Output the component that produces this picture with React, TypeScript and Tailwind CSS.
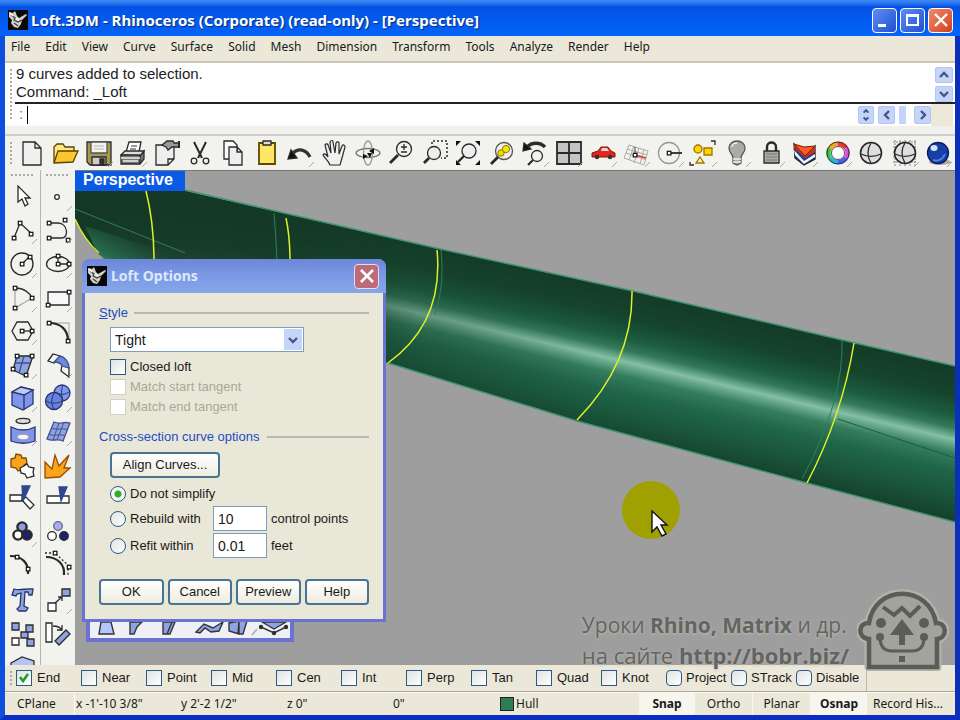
import React from 'react'

const H = ({ x, y }: { x: number; y: number }) => (
  <rect x={x - 1.7} y={y - 1.7} width="3.6" height="3.6" fill="#fff" stroke="#111" strokeWidth="1.2" />
)

const Tick = () => <path d="M24 29l5-5" stroke="#aaa" strokeWidth="1" />

const Icon = ({ children, tick = true }: { children: React.ReactNode; tick?: boolean }) => (
  <svg viewBox="0 0 30 30" className="size-[30px] shrink-0 overflow-visible" fill="none" stroke="#2a2a2a" strokeWidth="1.3">
    {children}
    {tick && <Tick />}
  </svg>
)

const RhinoLogo = () => (
  <svg viewBox="0 0 20 20" className="size-5 shrink-0">
    <rect width="20" height="20" fill="#080808" />
    <path d="M1 2l4 1 2-2 2 5 2 2 7-4 1 1-5 5-1 4-3 4-4-1-3-4 1-3-3-3z" fill="#d2d2cc" />
    <path d="M3 5l4 3-1 2 4 2 4-2M6 13l4 3" stroke="#444" strokeWidth="1.3" fill="none" />
    <path d="M2 3l3 3M8 8l3 2" stroke="#fff" strokeWidth="1.4" />
  </svg>
)

type Tool = { name: string; tick?: boolean; art: React.ReactNode }

const mainTools: Tool[] = [
  { name: 'New', tick: false, art: <path d="M6 4h12l6 6v17H6zM18 4v6h6" fill="#f0f0f0" /> },
  {
    name: 'Open',
    tick: false,
    art: (
      <>
        <path d="M4 24V9l3-3h6l2 3h9v4" fill="#ffe680" stroke="#5b4200" />
        <path d="M4 25l4-12h20l-5 11z" fill="#fbc72d" stroke="#5b4200" />
      </>
    ),
  },
  {
    name: 'Save',
    art: (
      <>
        <path d="M3 4h24v23H6l-3-3z" fill="#a39a4a" />
        <path d="M7 4h16v11H7z" fill="#f1f1ee" stroke="#555" />
        <path d="M8 19h14v8H8z" fill="#ccc" />
        <path d="M16 21h4v6h-4z" fill="#333" />
        <path d="M10 8h10M10 11h10" stroke="#ccc" />
      </>
    ),
  },
  {
    name: 'Print',
    art: (
      <>
        <path d="M8 14l3-10h12l-2 10z" fill="#fff" />
        <path d="M13 8h6M12 11h6" stroke="#777" />
        <path d="M3 17l4-4h19l-3 5z" fill="#ddd" />
        <path d="M3 17h19v9H3zM22 18l4-5v8l-4 5" fill="#777" />
        <path d="M3 20h19M5 23h15" stroke="#eee" />
      </>
    ),
  },
  {
    name: 'Document properties',
    tick: false,
    art: (
      <>
        <path d="M5 7h18v14l-6 6H5zM17 27v-6h6" fill="#eee" />
        <path d="M11 7l5-4h6l1 2h5v4h-7l-4 3-2-3z" fill="#999" />
        <path d="M28 3v7" strokeWidth="2" />
      </>
    ),
  },
  {
    name: 'Cut',
    tick: false,
    art: (
      <>
        <path d="M9 4l8 16M21 4l-8 16" strokeWidth="2" />
        <circle cx="9" cy="23" r="2.8" />
        <circle cx="21" cy="23" r="2.8" />
      </>
    ),
  },
  {
    name: 'Copy',
    tick: false,
    art: (
      <>
        <path d="M6 3h9l4 4v14H6z" fill="#fafafa" />
        <path d="M11 9h8l5 5v13H11zM19 9v5h5" fill="#eee" />
      </>
    ),
  },
  {
    name: 'Paste',
    tick: false,
    art: (
      <>
        <path d="M7 5h16v21H7z" fill="#ffe766" stroke="#5b4a00" strokeWidth="1.8" />
        <path d="M11 3h8v4h-8z" fill="#ddd" />
      </>
    ),
  },
  {
    name: 'Undo',
    art: (
      <>
        <path d="M8 15c5-5 13-4 17 4" strokeWidth="3.2" stroke="#333" />
        <path d="M3 21l3-9 6 8z" fill="#111" />
      </>
    ),
  },
  {
    name: 'Pan',
    tick: false,
    art: (
      <path
        d="M11 27c-2-5-5-6-7-10 1-2 3-1 5 2L6 7c1-2 3-1 3 0l3 8-1-11c1-2 3-2 3 0l2 11 1-10c1-2 3-1 3 0v11l3-8c1-2 3-1 3 1l-3 11-2 7z"
        fill="#f0f0f0"
        strokeWidth="1.2"
      />
    ),
  },
  {
    name: 'Rotate view',
    tick: false,
    art: (
      <>
        <ellipse cx="15" cy="15" rx="12" ry="4.5" stroke="#777" />
        <ellipse cx="15" cy="15" rx="4.5" ry="12" stroke="#999" />
        <path d="M15 18l-5-2v5zM16 13l5-3v6zM14 15l3 5 2-5z" fill="#111" stroke="none" />
      </>
    ),
  },
  {
    name: 'Zoom dynamic',
    tick: false,
    art: (
      <>
        <circle cx="18" cy="11" r="7.5" fill="#f2f2f2" />
        <path d="M12 17l-8 8" strokeWidth="2.8" />
        <path d="M15 9h6M18 6v6M15 14h6" />
      </>
    ),
  },
  {
    name: 'Zoom window',
    tick: false,
    art: (
      <>
        <path d="M12 6V3h15v17h-6" strokeDasharray="2 2" strokeWidth="1.5" />
        <circle cx="14" cy="15" r="6.5" fill="#eee" />
        <path d="M9 20l-5 5" strokeWidth="2.8" />
      </>
    ),
  },
  {
    name: 'Zoom extents',
    tick: false,
    art: (
      <>
        <circle cx="16" cy="13" r="7" fill="#eee" />
        <path d="M11 18l-6 6" strokeWidth="2.4" />
        <path d="M3 3h5L3 8zM27 3v5l-5-5zM3 22v5h5zM27 22v5h-5z" fill="#111" stroke="none" />
      </>
    ),
  },
  {
    name: 'Zoom selected',
    tick: false,
    art: (
      <>
        <circle cx="17" cy="13" r="8.5" fill="#eee" stroke="#555" />
        <path d="M11 19l-7 7" strokeWidth="2.8" />
        <circle cx="14" cy="15" r="3.2" fill="#f4dc00" stroke="#8b7a00" strokeWidth="1" />
        <circle cx="19" cy="11" r="3.6" fill="#ffe500" stroke="#8b7a00" strokeWidth="1" />
      </>
    ),
  },
  {
    name: 'Undo view change',
    art: (
      <>
        <path d="M7 9c5-5 13-5 18 0" strokeWidth="3.4" />
        <path d="M3 13l1-8 7 6z" fill="#111" />
        <circle cx="17" cy="18" r="5.5" fill="#f2f2f2" />
        <path d="M13 22l-5 5" strokeWidth="2.2" />
      </>
    ),
  },
  {
    name: 'Four viewports',
    art: (
      <>
        <path d="M3 4h24v22H3z" fill="#c4c4c4" strokeWidth="1.8" />
        <path d="M15 4v22M3 15h24" strokeWidth="1.8" />
      </>
    ),
  },
  {
    name: 'Named views',
    art: (
      <>
        <path d="M4 15l6-2 3-4h7l3 4 4 2v4H4z" fill="#e3261d" stroke="#8d1010" strokeWidth="1" />
        <path d="M14 10h5l2 3h-8z" fill="#ddd" stroke="none" />
        <circle cx="9" cy="19" r="2.2" fill="#333" stroke="none" />
        <circle cx="22" cy="19" r="2.2" fill="#333" stroke="none" />
      </>
    ),
  },
  {
    name: 'Set CPlane',
    art: (
      <>
        <path
          d="M8 7l-5 13M13 8L8 22M18 10l-5 15M23 11l-4 15M27 13l-4 14M8 7l19 6M6 11l20 6M5 15l20 7M3 20l20 7"
          stroke="#aaa"
          strokeWidth="1"
        />
        <path d="M14 17l11 3" stroke="#d33" strokeWidth="1.6" />
        <path d="M14 17V9" stroke="#666" />
        <H x={14} y={17} />
      </>
    ),
  },
  {
    name: 'Object snap',
    art: (
      <>
        <circle cx="14" cy="15" r="10.5" stroke="#999" />
        <path d="M14 15h13" strokeWidth="1.8" />
        <H x={14} y={15} />
      </>
    ),
  },
  {
    name: 'Select',
    art: (
      <>
        <path d="M23 3h4v4M2 24v3h4" />
        <circle cx="10" cy="11" r="4" fill="#ffd400" stroke="#a07400" />
        <path d="M16 10h8v7h-8z" fill="#ffd400" stroke="#a07400" />
        <path d="M12 19l4 6H8z" fill="#fff0a8" stroke="#a07400" />
      </>
    ),
  },
  {
    name: 'Hide',
    art: (
      <>
        <path d="M11 20c0-4-4-5-4-10a8 7 0 0116 0c0 5-4 6-4 10v5l-4 2-4-2z" fill="#aaa" stroke="#555" />
        <path d="M11 21h8M11 24h8M10 9c0-3 3-4 5-4" stroke="#eee" />
      </>
    ),
  },
  {
    name: 'Lock',
    art: (
      <>
        <path d="M11 14V9c0-6 9-6 9 0v5" strokeWidth="2.4" />
        <path d="M8 13h15v12H8z" fill="#aaa" />
        <path d="M10 16h11M10 19h11M10 22h11" stroke="#777" strokeWidth="1" />
      </>
    ),
  },
  {
    name: 'Layers',
    art: (
      <>
        <path d="M5 6l11 12 10-10v13l-11 6-9-7z" fill="#1f3f98" stroke="#222" />
        <path d="M5 12l10 11 11-7v3l-11 7L6 17z" fill="#f5f5f5" stroke="none" />
        <path d="M5 6l10 3 11-1v6l-10 6L5 10z" fill="#c93510" stroke="none" />
        <path d="M5 6l10 3 11-1-10 10z" fill="#ff5a28" stroke="#7a2008" strokeWidth="1" />
      </>
    ),
  },
  {
    name: 'Object properties',
    art: (
      <g strokeWidth="4.6">
        <path d="M15 6a9 9 0 018 4" stroke="#e33" />
        <path d="M23 10a9 9 0 010 10" stroke="#e14ad6" />
        <path d="M23 20a9 9 0 01-8 4" stroke="#4a5df0" />
        <path d="M15 24a9 9 0 01-8-4" stroke="#24b6e0" />
        <path d="M7 20a9 9 0 010-10" stroke="#3ec743" />
        <path d="M7 10a9 9 0 018-4" stroke="#f6a522" />
        <circle cx="15" cy="15" r="11" stroke="#333" strokeWidth="1" />
        <circle cx="15" cy="15" r="6.5" fill="#fff" stroke="#555" strokeWidth="1" />
      </g>
    ),
  },
  {
    name: 'Shade',
    tick: false,
    art: (
      <>
        <circle cx="15" cy="15" r="10.5" fill="#dedede" strokeWidth="1.6" />
        <path d="M15 5c-4 6-4 14 0 20M5 16c6 3 14 3 20 0" />
      </>
    ),
  },
  {
    name: 'Shaded viewport',
    art: (
      <>
        <path d="M3 4h24M3 9h24M3 14h24M3 19h24M3 24h24M5 2v26M10 2v26M15 2v26M20 2v26M25 2v26" stroke="#888" strokeWidth="1" strokeDasharray="2 1" />
        <circle cx="15" cy="15" r="10.5" fill="#dedede" strokeWidth="1.6" />
        <path d="M15 5c-4 6-4 14 0 20M5 16c6 3 14 3 20 0" />
      </>
    ),
  },
  {
    name: 'Render',
    art: (
      <>
        <ellipse cx="17" cy="24" rx="11" ry="3" fill="#aaa" stroke="none" />
        <circle cx="15" cy="15" r="10.5" fill="#173fa8" stroke="#0a1d5c" />
        <ellipse cx="11" cy="10" rx="3.5" ry="3" fill="#d7e6ff" stroke="none" />
        <path d="M10 22c5 2 10-1 12-6" stroke="#4f83e8" strokeWidth="2" />
      </>
    ),
  },
]

const sideTools: Tool[] = [
  { name: 'Pointer', tick: false, art: <path d="M10 4v16l4-3 3 7 3-2-3-6h5z" fill="#fff" /> },
  { name: 'Point', art: <circle cx="14" cy="15" r="2.3" fill="#fff" /> },
  { name: 'Polyline', art: <><path d="M6 23L12 8l12 11" /><H x={6} y={23} /><H x={12} y={8} /><H x={23} y={19} /></> },
  { name: 'Control point curve', art: <><path d="M6 8h9c10 0 11 15 4 15H6" /><H x={6} y={8} /><H x={22} y={5} /><H x={6} y={23} /><H x={25} y={25} /></> },
  { name: 'Circle', art: <><circle cx="14" cy="15" r="11" /><path d="M14 15l7-7" /><H x={14} y={15} /><H x={22} y={8} /></> },
  { name: 'Ellipse', art: <><ellipse cx="15" cy="15" rx="11.5" ry="7.5" /><path d="M15 7v8h11" /><H x={15} y={7} /><H x={15} y={15} /><H x={26} y={15} /></> },
  { name: 'Arc', art: <><path d="M7 5c9 0 15 5 17 10" /><path d="M7 5v20l17-10" stroke="#aaa" /><H x={7} y={5} /><H x={24} y={15} /><H x={7} y={25} /></> },
  { name: 'Rectangle', art: <><path d="M5 9h21v13H5z" fill="#f8f8f8" /><H x={26} y={9} /><H x={5} y={22} /></> },
  { name: 'Polygon', art: <><path d="M4 15l5-9h11l5 9-5 9H9z" /><path d="M14 15h10" /><H x={14} y={15} /><H x={24} y={15} /></> },
  { name: 'Fillet', tick: false, art: <><path d="M6 7h20v19" stroke="#bbb" /><path d="M6 7c12 0 19 7 19 18" strokeWidth="2.2" /><H x={6} y={7} /><H x={25} y={25} /></> },
  { name: 'Surface', art: <><path d="M9 6h16l-7 20L5 20z" fill="#8fa2e4" /><path d="M16 6l-5 17M7 13h15" stroke="#44508c" /><H x={9} y={6} /><H x={24} y={6} /><H x={5} y={19} /><H x={18} y={25} /></> },
  {
    name: 'Loft',
    art: (
      <>
        <path d="M5 11l5-7 7 2-6 7zM19 15l7 3v9l-8-6z" fill="#f6f6f6" />
        <path d="M17 6c5 1 9 6 9 12l-7-2c-1-3-4-4-8-4z" fill="#6d8ae0" stroke="#44508c" />
      </>
    ),
  },
  { name: 'Box', art: <><path d="M4 9l9-5 12 3v14l-10 6-11-5z" fill="#7f96ea" stroke="#27356b" /><path d="M4 9l9-5 12 3-9 5z" fill="#bccaf8" stroke="#27356b" /><path d="M16 12v15" stroke="#27356b" /></> },
  { name: 'Boolean', art: <><circle cx="19" cy="10" r="8" fill="#7f96ea" stroke="#27356b" /><circle cx="11" cy="18" r="8.5" fill="#6482e0" stroke="#27356b" /><path d="M3 18c6 3 11 3 16 0M11 10c-3 6-3 11 0 16M12 9c5 3 10 3 14 0M20 2c-2 5-2 10 0 15" stroke="#27356b" strokeWidth="1" /></> },
  { name: 'Project', art: <><ellipse cx="15" cy="4" rx="7" ry="2.6" fill="#ddd" /><path d="M3 10c8 4 16 4 24 0v14c-8 3-16 3-24 0z" fill="#7f96ea" stroke="#27356b" /><ellipse cx="15" cy="20" rx="6" ry="3" fill="#f2f4ff" stroke="#99b" /></> },
  { name: 'Mesh', art: <><path d="M11 5c6 3 9-1 16 1l-7 18c-6-3-10 1-16-2z" fill="#8fa2e4" stroke="#44508c" /><path d="M9 11c6 3 10-1 16 2M6 17c6 3 10-1 16 2M16 6l-6 17M21 5l-7 18" stroke="#44508c" strokeWidth="1" /></> },
  { name: 'Explode', tick: false, art: <><path d="M3 8l4-1 1-4 5 1 1 3 4 0 1 5-3 2 0 4-6 2-2-3-5-1z" fill="#f8a51b" stroke="#7a4a00" /><path d="M12 17l4-2 3-2 2 3 5 1-1 4 1 4-4 1-3 1-2-4-4-1z" fill="#fff" /></> },
  { name: 'Blast', tick: false, art: <path d="M2 27V11l7 7 3-14 4 11L26 4l-5 13 6 0-10 9z" fill="#f8a51b" stroke="#9a4c00" /> },
  { name: 'Trim', tick: false, art: <><path d="M2 11h12v6H2zM14 16l4-3 8 8-4 4z" fill="#fff" /><path d="M14 2h8l-7 15z" fill="#2f4691" stroke="#2f4691" /></> },
  { name: 'Split', tick: false, art: <><path d="M4 12h22v7H4z" fill="#fff" /><path d="M16 3h8l-6 14z" fill="#2f4691" stroke="#2f4691" /></> },
  { name: 'Group', art: <><circle cx="14" cy="9" r="4.6" fill="#8f9ae8" strokeWidth="2.4" /><circle cx="10" cy="17" r="4.6" fill="#fff" strokeWidth="2.4" /><circle cx="19" cy="17" r="4.6" fill="#1d2270" strokeWidth="2.4" /></> },
  { name: 'Ungroup', tick: false, art: <><circle cx="15" cy="8" r="4.3" fill="#a5aef0" stroke="#667" /><circle cx="9" cy="18" r="4.3" fill="#fff" /><circle cx="21" cy="18" r="4.3" fill="#1d2270" /></> },
  { name: 'Edit points', tick: false, art: <><path d="M2 5c12 0 19 7 18 18" strokeWidth="2.2" /><H x={9} y={6} /><H x={20} y={18} /></> },
  { name: 'Points on', tick: false, art: <><path d="M3 6c12 0 19 8 18 18" strokeWidth="2.2" /><path d="M2 2h9M13 3l12 11v10" strokeDasharray="2 2" /><H x={12} y={2} /><H x={26} y={16} /></> },
  { name: 'Text', tick: false, art: <path d="M4 10l2-6c6 2 12-1 19 0l-1 6h-3l-1-3h-3l-1 14 4 2-2 3h-7l-2-2 3-3 1-13-4 1-1 2z" fill="#8fa2e4" stroke="#27356b" /> },
  { name: 'Move', art: <><path d="M5 18h8v8H5z" fill="#fff" /><path d="M19 4h8v7h-8z" fill="#8fa2e4" /><path d="M12 18l7-6M15 12h4v4" /></> },
  { name: 'Array', tick: false, art: <><path d="M4 4h7v7H4zM18 6h7v7h-7zM13 13h7v6h-7zM19 20h7v7h-7z" fill="#8fa2e4" /><path d="M4 19h7v7H4z" fill="#fff" /></> },
  { name: 'Rotate', tick: false, art: <><path d="M3 4h6v19H3z" fill="#fff" /><path d="M12 22l11-11 4 4-11 11z" fill="#8fa2e4" /><path d="M10 7c4 0 7 1 9 4M14 11h5V6" /></> },
  { name: 'Solid', tick: false, art: <path d="M3 11l11-6 12 4v15H3z" fill="#b6c2f4" /> },
]

const menus = ['File', 'Edit', 'View', 'Curve', 'Surface', 'Solid', 'Mesh', 'Dimension', 'Transform', 'Tools', 'Analyze', 'Render', 'Help']

const osnaps = ['End', 'Near', 'Point', 'Mid', 'Cen', 'Int', 'Perp', 'Tan', 'Quad', 'Knot']
const osnapModes = ['Project', 'STrack', 'Disable']

const TitleBar = () => (
  <header className="flex h-9 shrink-0 items-center gap-[3px] bg-linear-to-b from-[#3a86f5] from-3% via-[#0352e4] via-20% to-[#0364fb] pl-2 pr-[7px] pt-1">
    <RhinoLogo />
    <h1 className="flex-1 truncate font-['Noto_Sans'] text-[15px] leading-5 font-bold text-white [text-shadow:1px_1px_1px_#0a2a80]">
      Loft.3DM - Rhinoceros (Corporate) (read-only) - [Perspective]
    </h1>
    <button aria-label="Minimize" className="flex size-[25px] items-end rounded border border-white bg-linear-to-br from-[#5f8df5] to-[#1f4fd0] p-[5px]">
      <span className="h-[3px] w-2 bg-white" />
    </button>
    <button aria-label="Maximize" className="flex size-[25px] items-center justify-center rounded border border-white bg-linear-to-br from-[#5f8df5] to-[#1f4fd0]">
      <span className="h-3 w-[13px] border-2 border-t-3 border-white" />
    </button>
    <button aria-label="Close" className="flex size-[25px] items-center justify-center rounded border border-white bg-linear-to-br from-[#f08a6c] to-[#d23c14]">
      <svg viewBox="0 0 14 14" className="size-3.5" stroke="#fff" strokeWidth="2.4"><path d="M1 1l12 12M13 1L1 13" /></svg>
    </button>
  </header>
)

const Chevron = ({ d }: { d: string }) => (
  <svg viewBox="0 0 10 10" className="size-2.5" fill="none" stroke="#44577e" strokeWidth="2.4"><path d={d} /></svg>
)

const scrollBtn = 'flex items-center justify-center rounded-xs bg-[#c5d4fb] border border-[#b3c5f0]'

const CommandArea = () => (
  <section className="shrink-0 border-t-2 border-[#c9c6b8] bg-[#fefefe]">
    <div className="flex">
      <Grip vertical />
      <div className="min-w-0 flex-1">
        <div className="flex h-[41px] border-b-2 border-[#222] pr-0.5">
          <div className="flex-1 pt-0.5 pl-px font-['Liberation_Sans'] text-[15px] leading-[18px] text-[#222]">
            <p>9 curves added to selection.</p>
            <p>Command: _Loft</p>
          </div>
          <div className="flex w-[18px] flex-col gap-[3px] pt-1">
            <button aria-label="Scroll up" className={`${scrollBtn} h-4`}><Chevron d="M1 7l4-4 4 4" /></button>
            <button aria-label="Scroll down" className={`${scrollBtn} h-4`}><Chevron d="M1 3l4 4 4-4" /></button>
          </div>
        </div>
        <div className="flex h-[22px] items-stretch pr-0.5">
          <label htmlFor="command" className="w-3 pl-1 font-['Liberation_Sans'] text-[15px] leading-5 text-[#777]">:</label>
          <span className="my-0.5 w-px bg-black" />
          <input id="command" className="min-w-0 flex-1 bg-transparent px-1 text-[15px] outline-none" />
          <div className="flex gap-1 py-0.5">
            <button aria-label="History" className={`${scrollBtn} w-4 flex-col`}>
              <Chevron d="M2 7l3-3 3 3" />
              <Chevron d="M2 3l3 3 3-3" />
            </button>
            <button aria-label="Scroll left" className={`${scrollBtn} w-[17px]`}><Chevron d="M7 1L3 5l4 4" /></button>
            <span className="w-[7px] bg-[#c5d4fb]" />
            <button aria-label="Scroll right" className={`${scrollBtn} ml-1 w-[17px]`}><Chevron d="M3 1l4 4-4 4" /></button>
          </div>
          <span className="w-[22px] bg-[#ece9d8]" />
        </div>
      </div>
    </div>
    <div className="h-2.5 border-b-2 border-[#cfcfc9] bg-[#f1f0ec]" />
  </section>
)

const Grip = ({ vertical = false }: { vertical?: boolean }) =>
  vertical ? (
    <span className="my-1.5 mr-[3px] ml-[5px] w-0.5 bg-[repeating-linear-gradient(to_bottom,#aab0a0_0_2px,transparent_2px_4px)]" />
  ) : (
    <span className="my-1 h-0.5 w-6 bg-[repeating-linear-gradient(to_right,#aaa_0_2px,transparent_2px_4px)]" />
  )

const Hull = () => (
  <svg viewBox="75 170 880 494" preserveAspectRatio="xMinYMin slice" className="absolute inset-0 size-full" fill="none">
    <defs>
      <linearGradient id="body" gradientUnits="userSpaceOnUse" x1="0" y1="144" x2="-34" y2="288">
        <stop offset="0" stopColor="#143c28" />
        <stop offset=".16" stopColor="#15442d" />
        <stop offset=".3" stopColor="#1c5c3f" />
        <stop offset=".38" stopColor="#34795a" />
        <stop offset=".43" stopColor="#68a98b" />
        <stop offset=".455" stopColor="#86bfa4" />
        <stop offset=".485" stopColor="#68a98b" />
        <stop offset=".55" stopColor="#347d5c" />
        <stop offset=".66" stopColor="#20664a" />
        <stop offset=".82" stopColor="#1a563b" />
        <stop offset="1" stopColor="#153f2a" />
      </linearGradient>
      <linearGradient id="shade" gradientUnits="userSpaceOnUse" x1="75" y1="0" x2="600" y2="0">
        <stop offset="0" stopColor="#143826" />
        <stop offset=".4" stopColor="#143826" stopOpacity=".85" />
        <stop offset=".65" stopColor="#143826" stopOpacity=".3" />
        <stop offset="1" stopColor="#143826" stopOpacity="0" />
      </linearGradient>
      <linearGradient id="bowEnd" gradientUnits="userSpaceOnUse" x1="130" y1="232" x2="112" y2="264">
        <stop offset="0" stopColor="#2c7553" stopOpacity="0" />
        <stop offset="1" stopColor="#2c7553" />
      </linearGradient>
    </defs>
    <path d="M75 166L185 190 440 248 633 290 855 342 955 365V521L807 482 577 420 388 362 100 254Q84 240 75 218z" fill="url(#body)" />
    <path d="M75 166L185 190 440 248 600 283V427L577 420 388 362 100 254Q84 240 75 218z" fill="url(#shade)" />
    <path d="M85 225L200 262 110 264 97 251z" fill="url(#bowEnd)" />
    <path d="M185 189L440 248 633 290 855 342 955 365M388 362L577 420 807 482 955 521" stroke="#3d9472" strokeWidth="1.4" />
    <path d="M75 208L185 252M274 212Q276 235 277 260M842 339Q844 400 802 478M441 249q4 34-6 65" stroke="#2e7f60" />
    <path d="M838 418L955 457" stroke="#1f5a41" />
    <path
      d="M75 218Q85 240 99 252M146 190Q154 222 154 260M286 217Q290 236 290 260M437 249Q444 322 388 362M632 290Q633 362 577 419M854 342Q842 415 807 482"
      stroke="#dff02a"
      strokeWidth="1.5"
    />
  </svg>
)

const CheckMark = () => (
  <svg viewBox="0 0 12 12" className="pointer-events-none absolute top-0.5 left-0.5 hidden size-3 peer-checked:block" fill="none" stroke="#21a121" strokeWidth="2.6">
    <path d="M2 5l3 4 5-7" />
  </svg>
)

const Check = ({ label, checked, disabled, round, className = '' }: { label: string; checked?: boolean; disabled?: boolean; round?: boolean; className?: string }) => (
  <label className={`flex shrink-0 items-center ${disabled ? 'text-[#aaa899]' : 'text-[#1a1a1a]'} ${className}`}>
    <span className="relative flex">
      <input
        type="checkbox"
        defaultChecked={checked}
        disabled={disabled}
        className={`peer size-4 appearance-none border bg-linear-to-br to-white ${disabled ? 'border-[#d3d0c0] from-white' : 'border-[#2d5a82] from-[#dfe3e2]'} ${round ? 'rounded' : ''}`}
      />
      <CheckMark />
    </span>
    {label}
  </label>
)

const Radio = ({ label, checked, className = '' }: { label: string; checked?: boolean; className?: string }) => (
  <label className={`flex items-center gap-1 ${className}`}>
    <input
      type="radio"
      name="simplify"
      defaultChecked={checked}
      className="size-4 shrink-0 appearance-none rounded-full border border-[#2d5a82] bg-linear-to-br from-[#dfe3e2] to-white checked:bg-[radial-gradient(circle,#2fae2f_0_3px,#f4f7f2_4px)]"
    />
    {label}
  </label>
)

const dialogBtn = 'rounded border-2 border-[#4a7391] bg-linear-to-b from-white to-[#eeece1]'
const field = 'h-[25px] w-[54px] shrink-0 border border-[#7f9db9] bg-white px-1 text-[14px] outline-none'

const LoftDialog = () => (
  <form
    role="dialog"
    aria-label="Loft Options"
    className="absolute top-[88px] left-[7px] w-[304px] rounded-t-lg border-3 border-t-0 border-[#6a72d2] bg-[#6a72d2] font-['Liberation_Sans'] text-[13px] leading-4 text-[#1a1a1a]"
  >
    <div className="-mx-[3px] flex h-[34px] items-center gap-1 rounded-t-lg bg-linear-to-b from-[#6d86d8] via-[#7a9ae6] to-[#86a5ea] pr-[7px] pl-[5px]">
      <RhinoLogo />
      <h2 className="flex-1 font-['Noto_Sans'] text-[14px] font-bold text-[#dfe8fb]">Loft Options</h2>
      <button type="button" aria-label="Close dialog" className="flex size-[25px] items-center justify-center rounded border border-[#e6dcee] bg-[#bd6b78]">
        <svg viewBox="0 0 14 14" className="size-3.5" stroke="#fff" strokeWidth="2.6"><path d="M1 1l12 12M13 1L1 13" /></svg>
      </button>
    </div>
    <div className="bg-[#e9e7d7] px-[14px] pt-3 pb-[14px]">
      <div className="flex items-center gap-2 text-[#1c4bc8]">
        <label htmlFor="style" className="w-[27px]"><u>S</u>tyle</label>
        <span className="h-0.5 flex-1 bg-[#b9b8ae]" />
      </div>
      <div className="relative mt-[6px] ml-[11px] w-[194px]">
        <select id="style" className="h-[25px] w-full appearance-none border border-[#7f9db9] bg-white px-1 text-[14px] outline-none">
          <option>Tight</option>
          <option>Normal</option>
          <option>Loose</option>
        </select>
        <span className="pointer-events-none absolute top-0.5 right-0.5 flex h-[21px] w-[18px] items-center justify-center bg-[#c5d4fb]">
          <Chevron d="M1 3l4 4 4-4" />
        </span>
      </div>
      <div className="mt-[7px] ml-[11px] flex flex-col gap-1">
        <Check label="Closed loft" className="gap-1" />
        <Check label="Match start tangent" disabled className="gap-1" />
        <Check label="Match end tangent" disabled className="gap-1" />
      </div>
      <div className="mt-[14px] flex items-center gap-2 text-[#1c4bc8]">
        <span>Cross-section curve options</span>
        <span className="h-0.5 flex-1 bg-[#b9b8ae]" />
      </div>
      <div className="ml-[11px]">
        <button type="button" className={`${dialogBtn} mt-[7px] h-[26px] w-[110px]`}>Align Curves...</button>
        <Radio label="Do not simplify" checked className="mt-2" />
        <div className="mt-1 flex items-center">
          <Radio label="Rebuild with" className="w-[103px]" />
          <input aria-label="Control points" defaultValue="10" className={field} />
          <span className="pl-1">control points</span>
        </div>
        <div className="mt-0.5 flex items-center">
          <Radio label="Refit within" className="w-[103px]" />
          <input aria-label="Tolerance" defaultValue="0.01" className={field} />
          <span className="pl-1">feet</span>
        </div>
      </div>
      <div className="mt-[21px] grid grid-cols-4 gap-1">
        {['OK', 'Cancel', 'Preview', 'Help'].map((name) => (
          <button key={name} type="button" className={`${dialogBtn} h-[26px]`}>{name}</button>
        ))}
      </div>
    </div>
  </form>
)

// flyout toolbar that peeks out from under the dialog
const SurfaceFlyout = () => (
  <div className="absolute top-[440px] left-[11px] flex h-[31px] w-[208px] items-end border-4 border-[#6a72d2] bg-[#eef0f6]">
    <svg viewBox="0 0 200 20" className="h-5 w-full" fill="#8fa2e4" stroke="#333" strokeWidth="1.4">
      <path d="M9 16l2-12h10l3 12z" fill="#b6c6fa" />
      <path d="M40 16V4h12l-5 5-3 7zM73 16V4h12l-5 12zM77 16l5-12" />
      <path d="M106 14l8-8 9 4 10-6-4 9-8 1-6-4-5 5z" />
      <path d="M139 5l10-2v13l-10-3zM149 3h8l-4 13h-5z" />
      <path d="M172 4l12 7 12-7z" />
      <path d="M171 9l13 6 12-6" fill="none" />
      <path d="M162 17l5-6" stroke="#aaa" />
      <circle cx="171" cy="9" r="1.5" fill="#222" />
      <circle cx="184" cy="15" r="1.5" fill="#222" />
      <circle cx="196" cy="9" r="1.5" fill="#222" />
    </svg>
  </div>
)

const Watermark = () => (
  <div className="pointer-events-none absolute right-1.5 -bottom-1.5 z-10 flex items-end gap-2 text-[#646461]">
    <p className="font-['Open_Sans'] text-[21px] leading-[30px] whitespace-nowrap [text-shadow:0_1px_3px_#bcbcb4]">
      Уроки <b>Rhino, Matrix</b> и др.
      <br />
      <span className="text-[22px]">
        на сайте <b>http://bobr.biz/</b>
      </span>
    </p>
    <svg viewBox="0 0 92 82" className="h-[82px] w-[92px]" fill="none" stroke="#5c5c58" strokeWidth="4.6">
      <path d="M12 78V50C0 49 1 33 12 34 18-5 72-5 79 34c11-1 12 15 1 16v28z" stroke="#b3b3aa" strokeWidth="9" strokeLinejoin="round" />
      <path d="M12 78V50C0 49 1 33 12 34 18-5 72-5 79 34c11-1 12 15 1 16v28z" fill="#a3a39c" />
      <path d="M26 18l11 8 8-7 8 8 10-10" strokeWidth="4" />
      <path d="M45 30L33 46h9v10h6V46h9z" fill="#5c5c58" stroke="none" />
      <path d="M23 48c0 9 4 14 12 14h20c8 0 12-5 12-14" strokeWidth="3" />
      <g fill="#5c5c58" stroke="none">
        <circle cx="24" cy="34" r="5" />
        <circle cx="67" cy="34" r="5" />
        <circle cx="23" cy="48" r="4" />
        <circle cx="67" cy="48" r="4" />
        <path d="M42 67h6v6h-6z" />
      </g>
    </svg>
  </div>
)

const Viewport = () => (
  <main className="relative min-w-0 flex-1 border-t border-[#777] bg-[#9e9e9e]">
    <Hull />
    <h2 className="absolute top-0 left-0 h-5 w-[110px] bg-[#0a5ae6] pl-2 font-['Liberation_Sans'] text-[16px] leading-[18px] font-bold text-white">
      Perspective
    </h2>
    <SurfaceFlyout />
    <LoftDialog />
    <svg viewBox="0 0 60 60" className="absolute top-[310px] left-[546px] size-[60px]">
      <circle cx="30" cy="29" r="29" fill="#a0a000" />
      <path d="M31 30v21l5-5 5 9 4-2-5-9h6z" fill="#fff" stroke="#111" strokeWidth="1.4" />
    </svg>
    <Watermark />
  </main>
)

const OsnapBar = () => (
  <div className="flex h-[27px] shrink-0 border-b border-[#aaa899] bg-[#ebe8d9] font-['Liberation_Sans'] text-[13px]">
    <Grip vertical />
    <div className="flex border-r border-[#bbb8a8] pl-px">
      {osnaps.map((name) => (
        <Check key={name} label={name} checked={name === 'End'} className="w-[65px] gap-[5px]" />
      ))}
      {osnapModes.map((name) => (
        <Check key={name} label={name} round className="w-[65px] gap-1 last:w-[70px]" />
      ))}
    </div>
  </div>
)

const StatusBar = () => (
  <footer className="flex h-[23px] shrink-0 items-center border-t border-[#f8f7f0] bg-[#ebe8d9] font-['Noto_Sans'] text-[12px] leading-5 text-[#1a1a1a]">
    <span className="w-[70px] shrink-0 border-r border-white pl-3">CPlane</span>
    <span className="w-[106px] shrink-0 pl-px">x -1'-10 3/8"</span>
    <span className="w-[106px] shrink-0">y 2'-2 1/2"</span>
    <span className="w-[106px] shrink-0">z 0"</span>
    <span className="w-[107px] shrink-0">0"</span>
    <span className="flex flex-1 items-center gap-0.5">
      <span className="size-3.5 border border-[#222] bg-[#2e7d57]" />
      Hull
    </span>
    <button className="h-full w-14 shrink-0 bg-[#f6f5ee] font-bold">Snap</button>
    <button className="h-full w-[58px] shrink-0 border-r border-[#f8f7f0]">Ortho</button>
    <button className="h-full w-[58px] shrink-0 border-r border-[#f8f7f0]">Planar</button>
    <button className="h-full w-14 shrink-0 bg-[#f6f5ee] font-bold">Osnap</button>
    <button className="h-full w-[88px] shrink-0 truncate pl-1.5 text-left">Record His...</button>
  </footer>
)

export default function App() {
  return (
    <div className="flex h-screen flex-col overflow-hidden bg-[#0b2fc8]">
      <TitleBar />
      <div className="flex min-h-0 flex-1 flex-col border-x-5 border-b-5 border-l-[#0f4fe0] border-r-[#0a2fb8] border-b-[#0a2fc0]">
        <nav className="flex h-[25px] shrink-0 items-center gap-[15px] bg-[#ebe8d9] pb-1 pl-[6px] font-['Noto_Sans'] text-[12px] leading-5 text-[#1a1a1a]">
          {menus.map((name) => (
            <button key={name}>{name}</button>
          ))}
        </nav>
        <CommandArea />
        <div className="flex h-[34px] shrink-0 bg-[#f2f2ee]">
          <Grip vertical />
          <div className="flex min-w-0 flex-1">
            {mainTools.map((tool) => (
              <button key={tool.name} aria-label={tool.name} className="flex min-w-0 flex-1 items-center justify-center">
                <Icon tick={tool.tick}>{tool.art}</Icon>
              </button>
            ))}
          </div>
        </div>
        <div className="flex min-h-0 flex-1">
          <aside className="w-[70px] shrink-0 overflow-hidden bg-[#f2f2ee] bg-[linear-gradient(to_right,transparent_35px,#b5b5b0_35px_36px,transparent_36px)]">
            <div className="grid grid-cols-2 justify-items-center">
              <Grip />
              <Grip />
            </div>
            <div className="grid h-[504px] grid-cols-2 grid-rows-15">
              {sideTools.map((tool) => (
                <button key={tool.name} aria-label={tool.name} className="flex min-h-0 items-center justify-center">
                  <Icon tick={tool.tick}>{tool.art}</Icon>
                </button>
              ))}
            </div>
          </aside>
          <Viewport />
        </div>
        <OsnapBar />
        <StatusBar />
      </div>
    </div>
  )
}
